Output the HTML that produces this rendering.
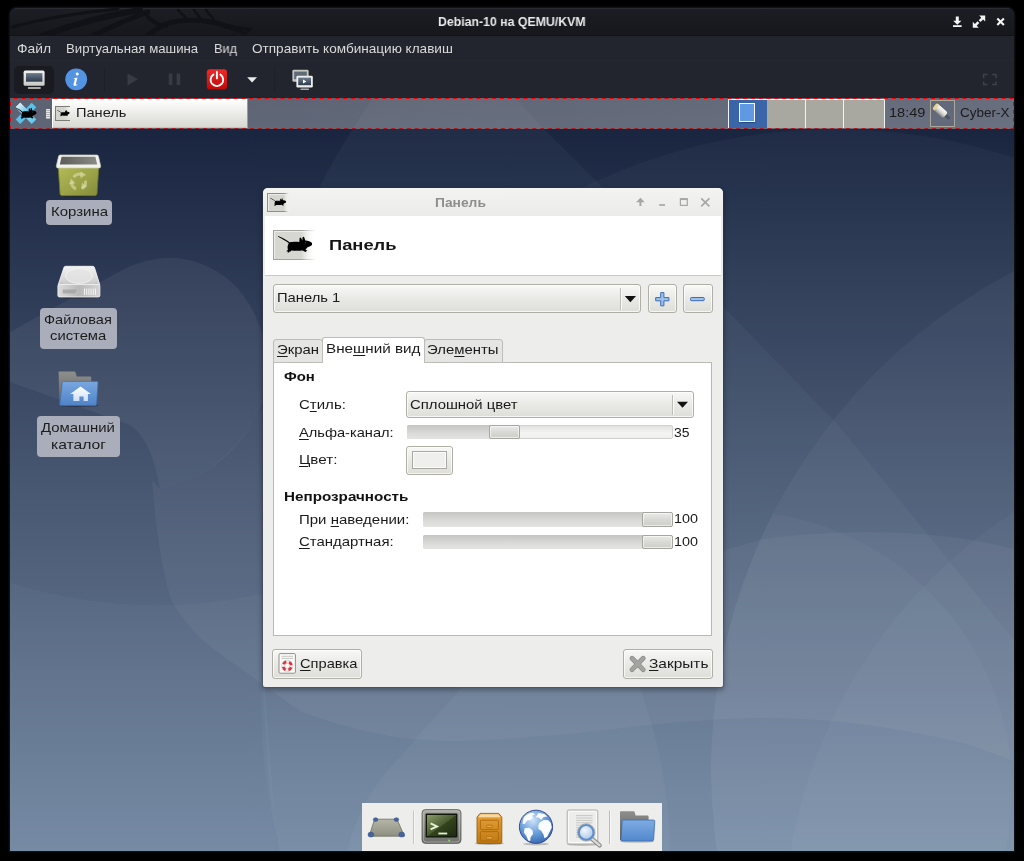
<!DOCTYPE html>
<html><head><meta charset="utf-8"><title>Debian-10 QEMU/KVM</title>
<style>
html,body{margin:0;padding:0;background:#000;}
body{width:1024px;height:861px;position:relative;overflow:hidden;font-family:"Liberation Sans",sans-serif;}
.a{position:absolute;}
.t{position:absolute;white-space:nowrap;line-height:1;transform-origin:0 0;will-change:transform;}
u{text-decoration:underline;text-decoration-thickness:1px;text-underline-offset:1.5px;}
.btn{position:absolute;box-sizing:border-box;border:1px solid #b0afa6;border-radius:3px;background:linear-gradient(#f8f8f7,#e9e9e6 50%,#deded9);box-shadow:inset 0 0 0 1px rgba(255,255,255,.7);}
.trough{position:absolute;box-sizing:border-box;border:1px solid #d0d0cc;border-radius:2px;background:linear-gradient(#e2e2e0,#f4f4f3 60%,#f0f0ee);}
.fill{position:absolute;box-sizing:border-box;border-radius:2px 0 0 2px;background:linear-gradient(#c5c5c3,#dcdcda 65%,#e3e3e1);}
.knob{position:absolute;box-sizing:border-box;border:1px solid #a6a5a0;border-radius:2px;background:linear-gradient(#e9e9e7,#d9d9d6 50%,#cdcdca);box-shadow:inset 0 0 0 1px rgba(255,255,255,.6);}
.lbl{position:absolute;background:#aaaeba;border-radius:4px;}
</style></head><body>
<div class="a" id="win" style="left:10px;top:8px;width:1004px;height:843px;border-radius:7px 7px 0 0;overflow:hidden;background:#23252e;box-shadow:0 0 2px 1px rgba(40,42,50,.55);">
<div class="a" style="left:0;top:0;width:1004px;height:28px;background:linear-gradient(#1c1e25,#191a1f 55%,#16171b);box-shadow:inset 0 1px 0 #2b2c33;"></div>
<svg class="a" style="left:0;top:0" width="340" height="28" viewBox="10 8 340 28">
<g fill="none" stroke="#111217" stroke-linecap="round">
<path d="M12 27 Q60 14 118 9" stroke-width="3"/>
<path d="M42 36 Q90 18 140 10" stroke-width="6"/>
<path d="M92 36 Q120 22 148 12" stroke-width="5"/>
<path d="M148 36 Q160 24 178 21 Q205 18 226 26 L242 31" stroke-width="5"/>
<path d="M146 14 Q152 24 166 26" stroke-width="4"/>
<path d="M186 18 L178 10 M200 18 L194 10 M214 20 L206 10" stroke-width="2.5"/>
<path d="M226 26 L250 29 L244 35" stroke-width="3"/>
</g>
</svg>

<div class="a" style="left:0;top:27px;width:1004px;height:1px;background:#121318;"></div>
<div class="a" style="left:0;top:52px;width:1004px;height:1px;background:#26282f;"></div>
<svg class="a" style="left:0;top:90px" width="1004" height="753" viewBox="10 98 1004 753">
<defs>
<linearGradient id="wg" x1="0" y1="98" x2="0" y2="851" gradientUnits="userSpaceOnUse">
<stop offset="0" stop-color="#162038"/><stop offset="0.045" stop-color="#1a2540"/><stop offset=".5" stop-color="#465570"/><stop offset="1" stop-color="#7487a2"/>
</linearGradient>
<clipPath id="c3clip"><circle cx="1273" cy="770" r="562"/></clipPath>
</defs>
<rect x="10" y="98" width="1004" height="753" fill="url(#wg)"/>
<g fill="#e8f3f4">
<circle cx="835" cy="703" r="574" fill-opacity="0.032"/>
<circle cx="1273" cy="770" r="562" fill-opacity="0.043"/>
<path d="M400 60 Q345 135 319 188 Q290 250 300 330 L290 600 L263 690 L268 770 L279 860 L1200 900 L1100 745 L1014 640 L838 425 L722 305 L603 188 L545 130 L480 60 Z" fill-opacity="0.037"/>
<path d="M10 332 L122 270 Q150 256 178 258 Q245 268 264 340 Q272 385 258 415 Q225 475 160 489 Q152 440 130 425 L10 382 Z" fill-opacity="0.06"/>
<path d="M152 480 Q158 560 172 602 Q190 632 216 651 L265 686 L300 711 Q380 742 457 741 Q540 738 614 729 Q690 719 760 718 Q800 718 844 722 Q910 730 967 744 L1014 761 L1014 549 Q970 538 926 534.6 Q885 531 844 532.6 Q800 534 763 539 L722 551 L700 560 L262 408 Q225 475 160 489 Z" fill-opacity="0.05"/>
<path d="M10 583 Q140 622 265 593 L265 690 L277 851 L10 851 Z" fill-opacity="0.03"/>
<path d="M345 862 Q356 800 402 755 Q430 722 457 693 L480 660 L630 660 L641 691 Q661 745 668 810 L671 862 Z" fill-opacity="0.04"/>
<circle cx="733" cy="790" r="279" fill-opacity="0.03" clip-path="url(#c3clip)"/>
<circle cx="1290" cy="937" r="507" fill-opacity="0.032"/>
</g>
</svg>

</div>
<div class="t" style="left:438.10px;top:15.07px;font-size:13.50px;font-weight:bold;color:#e9e9e9;transform:scaleX(0.9108);">Debian-10 на QEMU/KVM</div>
<div class="t" style="left:16.60px;top:41.83px;font-size:13.20px;color:#dadada;transform:scaleX(1.0477);">Файл</div>
<div class="t" style="left:66.10px;top:41.83px;font-size:13.20px;color:#dadada;transform:scaleX(0.9981);">Виртуальная машина</div>
<div class="t" style="left:213.60px;top:41.83px;font-size:13.20px;color:#dadada;transform:scaleX(0.9631);">Вид</div>
<div class="t" style="left:251.60px;top:41.83px;font-size:13.20px;color:#dadada;transform:scaleX(1.0291);">Отправить комбинацию клавиш</div>
<!-- titlebar buttons -->
<svg class="a" style="left:950px;top:12px" width="60" height="20" viewBox="950 12 60 20">
<g fill="#f4f4f4">
<path d="M955.8 16.5h3v4.2h2.6l-4.1 4.1-4.1-4.1h2.6z"/><rect x="953" y="25.2" width="8.6" height="1.8"/>
<path d="M979.2 15.6h6v6l-2.1-2.1-2.6 2.6-1.8-1.8 2.6-2.6z"/><path d="M978.8 27.8h-6v-6l2.1 2.1 2.6-2.6 1.8 1.8-2.6 2.6z"/>
</g>
<path d="M997.3 18.4l6.6 6.6M1003.9 18.4l-6.6 6.6" stroke="#f4f4f4" stroke-width="2.1" fill="none"/>
</svg>
<!-- toolbar: active monitor button -->
<div class="a" style="left:14px;top:66px;width:40px;height:28px;border-radius:5px;background:#1a1b21;"></div>
<svg class="a" style="left:20px;top:66px" width="300" height="28" viewBox="20 66 300 28">
<defs>
<linearGradient id="scr" x1="0" y1="0" x2="0" y2="1"><stop offset="0" stop-color="#6b7b8e"/><stop offset="1" stop-color="#2e3b4c"/></linearGradient>
<linearGradient id="pw" x1="0" y1="0" x2="0" y2="1"><stop offset="0" stop-color="#ef2929"/><stop offset="1" stop-color="#c20808"/></linearGradient>
<linearGradient id="bez" x1="0" y1="0" x2="0" y2="1"><stop offset="0" stop-color="#f2f2f0"/><stop offset="1" stop-color="#c9c9c5"/></linearGradient>
</defs>
<!-- monitor -->
<rect x="23.6" y="70.6" width="21" height="15.2" rx="1.6" fill="url(#bez)"/>
<rect x="26" y="73.1" width="16.4" height="8.6" fill="url(#scr)"/>
<rect x="27.8" y="87" width="13" height="2" rx=".8" fill="#a9a9a5"/>
<!-- info -->
<circle cx="76.2" cy="79.3" r="10.9" fill="#5294e2"/>
<path d="M77.3 72.6a1.5 1.5 0 1 1-.1 3 1.5 1.5 0 0 1 .1-3zM73.9 78.3l3.6-.9-1.7 6.6c-.2.8.3.9 1.4.2l.3.5c-1.6 1.5-4.5 1.9-3.9-.6l1.2-4.6c.1-.6-.3-.7-1-.6z" fill="#fff"/>
<!-- separator -->
<rect x="104" y="68" width="1" height="25" fill="#1e2027"/>
<!-- play / pause (disabled) -->
<path d="M127.5 73.2v12.2l10.4-6.1z" fill="#393b43"/>
<rect x="168.8" y="73.6" width="3.6" height="11.4" fill="#393b43"/><rect x="176.6" y="73.6" width="3.6" height="11.4" fill="#393b43"/>
<!-- power -->
<rect x="206.8" y="69.2" width="20.2" height="20.2" rx="3.2" fill="url(#pw)"/>
<path d="M213.4 74.6a6.3 6.3 0 1 0 7 0" stroke="#fff" stroke-width="1.9" fill="none" stroke-linecap="round"/>
<path d="M216.9 71.8v6.6" stroke="#fff" stroke-width="1.9" stroke-linecap="round"/>
<!-- dropdown arrow -->
<path d="M247.2 77.2h9.8l-4.9 5.4z" fill="#ececec"/>
<!-- separator -->
<rect x="274" y="68" width="1" height="25" fill="#1e2027"/>
<!-- screens -->
<rect x="292.4" y="69.8" width="16.2" height="12" rx="1.4" fill="#c4c4c0"/>
<rect x="294.2" y="71.6" width="12.6" height="7.6" fill="#5d6a78"/>
<rect x="296.4" y="75.8" width="16.4" height="11.8" rx="1.4" fill="#eeeeec"/>
<rect x="298.2" y="77.6" width="12.8" height="7.6" fill="url(#scr)"/>
<path d="M303 79.4v4l3.4-2z" fill="#fff"/>
<rect x="300.4" y="88.4" width="8.6" height="1.6" rx=".6" fill="#a9a9a5"/>
</svg>
<!-- fullscreen (disabled) -->
<svg class="a" style="left:980px;top:70px" width="20" height="18" viewBox="980 70 20 18">
<path d="M983.6 78.2v-3.6h3.8M992.2 74.6h3.8v3.6M996 81.4v3.2h-3.8M987.4 84.6h-3.8v-3.2" stroke="#404145" stroke-width="1.5" fill="none"/>
</svg>

<div class="a" style="left:0;top:0;width:1024px;height:861px;filter:blur(.35px);">
<!-- ===== xfce top panel ===== -->
<div class="a" style="left:10px;top:98px;width:1004px;height:31px;background:linear-gradient(90deg,rgba(230,230,228,.335),rgba(232,232,232,.39));"></div>
<svg class="a" style="left:10px;top:98px" width="1004" height="31" viewBox="10 98 1004 31">
<defs>
<linearGradient id="xa" x1="0" y1="0" x2="1" y2="1"><stop offset="0" stop-color="#ffffff"/><stop offset=".45" stop-color="#a8def2"/><stop offset="1" stop-color="#4fbfe8"/></linearGradient>
<symbol id="mouse" viewBox="0 0 34.3 17.7" preserveAspectRatio="none">
<path d="M0.1 0 C4 1.600 8.500 3.800 11.600 6.300 C14 5.400 18 5.600 21.300 6 L21.600 2.200 C21.800 1.300 22.600 1.200 23.100 2 L24.300 4.600 L24.600 1.300 C24.900 0.400 25.900 0.500 26.300 1.400 L27.300 4.600 C30 4.600 33 5.600 34.200 7.200 C34.600 8.200 33.800 9.400 32.600 10 L29.200 11.400 C28.600 12.400 28 13 27.400 13.400 L29.600 15 L27.800 15.100 L28.600 16.300 L26.400 15.600 L24.600 14.400 C21 15 16 15 13.400 14.600 L11.800 16.200 L11.400 15.200 L9.800 17.400 L9.900 15.400 L8.200 15.200 L10 13.800 C9.200 11.800 9.600 9 10.800 7.200 C8 5 4 2.600 0 0.700 Z" fill="#000"/>
<circle cx="27.700" cy="6.700" r=".55" fill="#6a6a6a"/>
</symbol>
</defs>
<!-- dashed border -->
<path d="M10 98.5H1014" stroke="#f40000" stroke-width="1" stroke-dasharray="3.92 3.92" stroke-dashoffset="-3.9"/>
<path d="M10 128.5H1014" stroke="#a81a1c" stroke-width="1" stroke-dasharray="3.92 3.92" stroke-dashoffset="-4.9"/>
<path d="M10.5 99V128" stroke="#f40000" stroke-width="1" stroke-dasharray="3.92 3.92" stroke-dashoffset="-3"/>
<path d="M1013.5 99V128" stroke="#f40000" stroke-width="1" stroke-dasharray="3.92 3.92" stroke-dashoffset="-3"/>
<!-- xfce logo -->
<g>
<path d="M15.7 107.2l4.6-4.5 16 16.8-4.6 4.6z" fill="url(#xa)"/>
<path d="M31.7 102.7l4.6 4.6-16 16.8-4.6-4.6z" fill="#58c3ea"/>
<path d="M15.7 107.2l4.6-4.5 7.4 7.6-4.6 4.6z" fill="url(#xa)"/>
<use href="#mouse" x="15.4" y="107.300" width="21.300" height="12.500"/>
</g>
<!-- handle -->
<g fill="#e6e6de"><rect x="46" y="109" width="4" height="1.3"/><rect x="46" y="111" width="4" height="1.3"/><rect x="46" y="113" width="4" height="1.3"/><rect x="46" y="115" width="4" height="1.3"/><rect x="46" y="117" width="4" height="1.6"/></g>
<g fill="#c4c4bc"><rect x="46" y="110.3" width="4" height=".7"/><rect x="46" y="112.3" width="4" height=".7"/><rect x="46" y="114.3" width="4" height=".7"/><rect x="46" y="116.3" width="4" height=".7"/></g>
</svg>
<!-- task button -->
<div class="a" style="left:52px;top:99px;width:196px;height:29px;box-sizing:border-box;background:linear-gradient(#ffffff,#f4f4f2 30%,#e6e6e2 65%,#d9d9d3);border-left:1px solid #fff;border-right:1px solid #9c9c92;border-bottom:1px solid #c4c4bc;"></div>
<div class="a" style="left:55px;top:106px;width:15px;height:15px;box-sizing:border-box;border:1px solid #7c7c76;border-right:none;background:linear-gradient(90deg,#d3d4ce 55%,rgba(235,235,232,0));"></div>
<svg class="a" style="left:57.2px;top:110.2px" width="12.8" height="6.8" viewBox="0 0 34.3 17.7" preserveAspectRatio="none"><use href="#mouse" width="34.3" height="17.7"/></svg>
<div class="t" style="left:76.10px;top:106.26px;font-size:13.40px;color:#1c1c1c;transform:scaleX(1.0909);">Панель</div>

<!-- pager -->
<div class="a" style="left:728px;top:99px;width:157px;height:29px;background:#f2f2ee;"></div>
<div class="a" style="left:729px;top:100px;width:37.6px;height:27.5px;background:#3a66a9;"></div>
<div class="a" style="left:738.6px;top:103.2px;width:16.6px;height:18.6px;box-sizing:border-box;border:1.2px solid #f4f6fa;background:#6198e2;box-shadow:0 .5px 1px rgba(20,40,80,.5);"></div>
<div class="a" style="left:767.4px;top:100px;width:37.4px;height:27.5px;background:#a9a8a0;"></div>
<div class="a" style="left:805.6px;top:100px;width:37.4px;height:27.5px;background:#a9a8a0;"></div>
<div class="a" style="left:843.8px;top:100px;width:40.2px;height:27.5px;background:#a9a8a0;"></div>
<div class="t" style="left:888.60px;top:106.36px;font-size:13.40px;color:#1c1c1c;transform:scaleX(1.0885);">18:49</div>

<!-- notifier button -->
<div class="a" style="left:930px;top:100px;width:25.4px;height:27.4px;box-sizing:border-box;border:1px solid #a9a69a;background:rgba(90,98,118,.35);"></div>
<svg class="a" style="left:932px;top:102px" width="22" height="24" viewBox="932 102 22 24">
<defs><linearGradient id="plug" x1="0" y1="0" x2="0" y2="1"><stop offset="0" stop-color="#ffffff"/><stop offset=".55" stop-color="#d8d8d6"/><stop offset="1" stop-color="#8e8e8a"/></linearGradient></defs>
<g transform="rotate(41 940.5 111)">
<rect x="946" y="109.600" width="6.600" height="2.800" rx="1.200" fill="#4e5158"/>
<rect x="932.600" y="107.300" width="14.600" height="7.400" rx="2.200" fill="url(#plug)"/>
<rect x="932.600" y="107.300" width="3.200" height="7.400" rx="1.600" fill="#ecd28a" fill-opacity=".9"/>
</g>
</svg>
<div class="t" style="left:959.60px;top:106.36px;font-size:13.40px;color:#1c1c1c;transform:scaleX(1.0052);">Cyber-X</div>


<!-- ===== desktop icons ===== -->
<svg class="a" style="left:50px;top:150px" width="60" height="260" viewBox="50 150 60 260">
<defs>
<linearGradient id="tb" x1="0" y1="0" x2="1" y2="1"><stop offset="0" stop-color="#b4bb57"/><stop offset="1" stop-color="#858c3a"/></linearGradient>
<linearGradient id="ti" x1="0" y1="0" x2="1" y2="0"><stop offset="0" stop-color="#5c5d59"/><stop offset="1" stop-color="#8a8b87"/></linearGradient>
<linearGradient id="dt" x1="0" y1="0" x2="0" y2="1"><stop offset="0" stop-color="#f4f4f4"/><stop offset="1" stop-color="#c9c9c9"/></linearGradient>
<linearGradient id="df" x1="0" y1="0" x2="1" y2="0"><stop offset="0" stop-color="#dcdcdc"/><stop offset=".5" stop-color="#b8b8b8"/><stop offset="1" stop-color="#d4d4d4"/></linearGradient>
<linearGradient id="fb" x1="0" y1="0" x2="0" y2="1"><stop offset="0" stop-color="#8e8e8c"/><stop offset="1" stop-color="#60605e"/></linearGradient>
<linearGradient id="ff" x1="0" y1="0" x2="0" y2="1"><stop offset="0" stop-color="#79a7df"/><stop offset="1" stop-color="#4f84c9"/></linearGradient>
<linearGradient id="hs" x1="0" y1="0" x2="0" y2="1"><stop offset="0" stop-color="#ffffff"/><stop offset="1" stop-color="#cfe0f5"/></linearGradient>
</defs>
<!-- trash -->
<ellipse cx="78.5" cy="195.6" rx="19" ry="1.6" fill="#000" fill-opacity=".35"/>
<path d="M58.2 166.5h40.6l-1.8 27.2c-.1 1.2-.9 2-2.1 2h-32.8c-1.2 0-2-.8-2.1-2z" fill="url(#tb)" stroke="#6f7628" stroke-width=".8"/>
<path d="M60.2 155h36.6c.8 0 1.4.4 1.6 1.1l2.2 9.6c.3 1.400-.4 2.3-1.800 2.300h-40.600c-1.400 0-2.100-.9-1.800-2.300l2.200-9.600c.2-.7.800-1.100 1.600-1.100z" fill="#f2f3ee" stroke="#c9ccb6" stroke-width=".7"/>
<path d="M61.6 156.8h33.800l1.800 7.800h-37.400z" fill="url(#ti)"/>
<g fill="none" stroke="#d9dea6" stroke-width="3" stroke-opacity=".62"><path d="M73.600 177.200a7 7 0 0 1 8.400-2.600"/><path d="M85.300 180.600a7 7 0 0 1-3.300 8"/><path d="M76 189a7 7 0 0 1-4.200-7"/></g>
<g fill="#d9dea6" fill-opacity=".66"><path d="M80.600 171.400l5.600 3.400-5.800 3.400z"/><path d="M87 186.400l-6 2.600 1-6.400z"/><path d="M69 184.600l2-6 4.400 4.600z"/></g>
<!-- drive -->
<ellipse cx="79" cy="297.200" rx="21" ry="1.500" fill="#000" fill-opacity=".3"/>
<path d="M65.600 266.300h27.200c.7 0 1.300.4 1.600 1l5.400 17.500h-41.600l5.800-17.500c.3-.6.900-1 1.600-1z" fill="url(#dt)" stroke="#fafafa" stroke-width=".8"/>
<ellipse cx="79" cy="276" rx="13.600" ry="7.400" fill="#e4e4e4" stroke="#f6f6f6" stroke-width=".7" fill-opacity=".8"/>
<rect x="57.900" y="284.600" width="42" height="12.400" rx="1.400" fill="url(#df)" stroke="#f4f4f4" stroke-width=".8"/>
<path d="M62.600 289.400h14.400l-2 4.200h-12.400z" fill="#9c9c9c" fill-opacity=".7"/>
<g stroke="#f4f4f4" stroke-width="1"><path d="M84.500 288.500v6.400M86.700 288.500v6.400M88.900 288.500v6.400M91.100 288.500v6.400M93.300 288.500v6.400M95.500 288.500v6.400"/></g>
<circle cx="62" cy="283" r=".7" fill="#bbb"/><circle cx="96" cy="283" r=".7" fill="#bbb"/>
<!-- home folder -->
<ellipse cx="79" cy="405.400" rx="19.500" ry="1.600" fill="#000" fill-opacity=".3"/>
<path d="M58.600 372.600c0-.6.400-1 1-1h14.800c.5 0 .9.300 1.100.8l1.300 4.200h13.400c.6 0 1 .4 1 1v27.600h-30.800c-.6 0-1-.4-1-1z" fill="url(#fb)"/>
<path d="M63.400 381.400h33.600c.7 0 1.100.5 1 1.200l-1.500 21.800c0 .6-.5 1-1.100 1h-34.600c-.6 0-1-.5-.9-1.100l2.400-21.900c.1-.6.500-1 1.100-1z" fill="url(#ff)" stroke="#3e70b4" stroke-width=".7"/>
<path d="M80.600 386.400l10.400 7.600h-3.100v7h-4.300v-4.400h-4.200v4.400h-6v-7h-3.200z" fill="url(#hs)"/>
</svg>
<div class="lbl" style="left:46px;top:200px;width:66px;height:24.800px;"></div>
<div class="t" style="left:50.60px;top:205.36px;font-size:13.40px;color:#1c1c1c;transform:scaleX(1.1167);">Корзина</div>

<div class="lbl" style="left:40.200px;top:308px;width:76.800px;height:40.800px;"></div>
<div class="t" style="left:44.00px;top:312.96px;font-size:13.40px;color:#1c1c1c;transform:scaleX(1.0912);">Файловая</div>

<div class="t" style="left:49.80px;top:329.06px;font-size:13.40px;color:#1c1c1c;transform:scaleX(1.1041);">система</div>

<div class="lbl" style="left:37px;top:416px;width:83px;height:41px;"></div>
<div class="t" style="left:40.50px;top:420.66px;font-size:13.40px;color:#1c1c1c;transform:scaleX(1.1134);">Домашний</div>

<div class="t" style="left:50.90px;top:437.56px;font-size:13.40px;color:#1c1c1c;transform:scaleX(1.1686);">каталог</div>

<!-- ===== Panel preferences dialog ===== -->
<div class="a" style="left:263px;top:188px;width:459.5px;height:499px;border-radius:5px 5px 2px 2px;background:#ededeb;box-shadow:0 0 0 .6px rgba(60,62,70,.55),0 2px 5px 1px rgba(10,15,30,.38);"></div>
<div class="a" style="left:263px;top:188px;width:459.5px;height:28px;border-radius:5px 5px 0 0;background:linear-gradient(#f3f3f2,#ebebe9);"></div>
<!-- title icon -->
<div class="a" style="left:267px;top:192.500px;width:21px;height:19.500px;box-sizing:border-box;border:1px solid #8e8e88;border-right:none;background:linear-gradient(90deg,#d5d6d0 80%,rgba(238,238,236,0) 100%);box-shadow:inset 1px 1px 0 #ebebe7;"></div>
<div class="a" style="left:283.500px;top:192px;width:5.500px;height:21px;background:linear-gradient(90deg,rgba(239,239,237,0),#efefed 90%);"></div>
<svg class="a" style="left:269.8px;top:198.2px" width="16.3" height="8.4" viewBox="0 0 34.3 17.7" preserveAspectRatio="none"><use href="#mouse" width="34.3" height="17.7"/></svg>
<div class="t" style="left:434.70px;top:197.00px;font-size:12.40px;font-weight:bold;color:#8f8f8d;transform:scaleX(1.1139);">Панель</div>

<svg class="a" style="left:630px;top:194px" width="86" height="16" viewBox="630 194 86 16">
<path d="M640.400 197.800l4.300 4.400h-3.300v3.800h-2v-3.800h-3.300z" fill="#a6a6a4"/>
<g stroke="#a6a6a4" fill="none" stroke-width="1.700">
<path d="M659.200 205h5.800"/>
<path d="M680 199.200h7.600"/>
<rect x="680.400" y="198.800" width="6.900" height="6.600" stroke-width="1.200"/>
<path d="M701.200 198.400l8.200 8M709.400 198.400l-8.200 8" stroke-width="1.600"/>
</g></svg>
<!-- white header -->
<div class="a" style="left:265px;top:216px;width:455.500px;height:58.500px;background:#fff;"></div>
<div class="a" style="left:265px;top:274.500px;width:455.500px;height:1.200px;background:#c8c8c4;"></div>
<div class="a" style="left:273px;top:230px;width:43px;height:30px;box-sizing:border-box;border:1px solid #a4a49e;border-right:none;background:linear-gradient(90deg,#d6d7d1 66%,rgba(255,255,255,0) 100%);box-shadow:inset 1px 1px 0 #ecece8;"></div>
<div class="a" style="left:301px;top:229px;width:16px;height:32px;background:linear-gradient(90deg,rgba(255,255,255,0),#fff 92%);"></div>
<svg class="a" style="left:277.7px;top:236.3px" width="34.3" height="17.7" viewBox="0 0 34.3 17.7"><use href="#mouse" width="34.3" height="17.7"/></svg>
<div class="t" style="left:329.10px;top:236.56px;font-size:15.40px;font-weight:bold;color:#151515;transform:scaleX(1.1894);">Панель</div>

<!-- panel chooser -->
<div class="btn" style="left:273px;top:284.200px;width:368px;height:29.300px;"></div>
<div class="a" style="left:620px;top:288px;width:1px;height:22px;background:#bdbdb6;"></div><div class="a" style="left:621px;top:288px;width:1px;height:22px;background:#fbfbfa;"></div>
<svg class="a" style="left:623px;top:294px" width="15" height="10" viewBox="623 294 15 10"><path d="M624.800 296h11.200l-5.600 6.200z" fill="#111"/></svg>
<div class="t" style="left:277.10px;top:291.46px;font-size:13.40px;color:#1a1a1a;transform:scaleX(1.1015);">Панель 1</div>

<div class="btn" style="left:647.500px;top:284.200px;width:29.500px;height:29.300px;"></div>
<div class="btn" style="left:683px;top:284.200px;width:29.500px;height:29.300px;"></div>
<svg class="a" style="left:652px;top:290px" width="56" height="18" viewBox="652 290 56 18">
<path d="M660.700 292.600h3.200v5h5v3.200h-5v5h-3.200v-5h-5v-3.200h5z" fill="#9fc0e8" stroke="#3b6db5" stroke-width="1" stroke-linejoin="round"/>
<rect x="690.600" y="297.500" width="13.600" height="3.200" rx=".8" fill="#9fc0e8" stroke="#3b6db5" stroke-width="1"/>
</svg>
<!-- notebook -->
<div class="a" style="left:273px;top:361.500px;width:439px;height:274.500px;box-sizing:border-box;background:#fff;border:1px solid #b9b9b3;"></div>
<div class="a" style="left:273px;top:338.500px;width:49.500px;height:24px;box-sizing:border-box;background:#e5e5e3;border:1px solid #bdbdb7;border-radius:3px 3px 0 0;"></div>
<div class="a" style="left:424px;top:338.500px;width:79px;height:24px;box-sizing:border-box;background:#e5e5e3;border:1px solid #bdbdb7;border-radius:3px 3px 0 0;"></div>
<div class="a" style="left:322px;top:337px;width:102.500px;height:26px;box-sizing:border-box;background:#fff;border:1px solid #bdbdb7;border-bottom:none;border-radius:3px 3px 0 0;"></div>
<div class="t" style="left:276.80px;top:343.46px;font-size:13.40px;color:#1a1a1a;transform:scaleX(1.1111);"><u>Э</u>кран</div>

<div class="t" style="left:326.10px;top:342.46px;font-size:13.40px;color:#1a1a1a;transform:scaleX(1.1378);">Вне<u>ш</u>ний вид</div>

<div class="t" style="left:426.70px;top:343.46px;font-size:13.40px;color:#1a1a1a;transform:scaleX(1.1121);">Эле<u>м</u>енты</div>

<div class="t" style="left:284.10px;top:369.96px;font-size:13.40px;font-weight:bold;color:#111;transform:scaleX(1.1149);">Фон</div>

<div class="t" style="left:298.70px;top:397.96px;font-size:13.40px;color:#1a1a1a;transform:scaleX(1.1214);">С<u>т</u>иль:</div>

<div class="btn" style="left:406px;top:391px;width:287.500px;height:27px;"></div>
<div class="a" style="left:672px;top:394.500px;width:1px;height:20px;background:#bdbdb6;"></div><div class="a" style="left:673px;top:394.500px;width:1px;height:20px;background:#fbfbfa;"></div>
<svg class="a" style="left:675px;top:400px" width="15" height="10" viewBox="675 400 15 10"><path d="M677 401.800h11l-5.500 6z" fill="#111"/></svg>
<div class="t" style="left:410.10px;top:397.96px;font-size:13.40px;color:#1a1a1a;transform:scaleX(1.1108);">Сплошной цвет</div>

<div class="t" style="left:298.70px;top:425.66px;font-size:13.40px;color:#1a1a1a;transform:scaleX(1.0925);"><u>А</u>льфа-канал:</div>

<div class="trough" style="left:407px;top:425px;width:265.500px;height:14.400px;"></div>
<div class="fill" style="left:407px;top:425px;width:90px;height:14.400px;"></div>
<div class="knob" style="left:489.300px;top:425px;width:31px;height:14.400px;"></div>
<div class="t" style="left:674.30px;top:425.66px;font-size:13.40px;color:#1a1a1a;transform:scaleX(1.0399);">35</div>

<div class="t" style="left:298.70px;top:453.26px;font-size:13.40px;color:#1a1a1a;transform:scaleX(1.1378);"><u>Ц</u>вет:</div>

<div class="btn" style="left:406px;top:446px;width:46.800px;height:28.500px;"></div>
<div class="a" style="left:411.800px;top:451.400px;width:35.600px;height:17.400px;box-sizing:border-box;background:#efefed;border:1px solid #a9a9a2;box-shadow:inset 0 0 0 1px #fbfbfa;"></div>
<div class="t" style="left:284.10px;top:489.66px;font-size:13.40px;font-weight:bold;color:#111;transform:scaleX(1.1368);">Непрозрачность</div>

<div class="t" style="left:298.70px;top:512.66px;font-size:13.40px;color:#1a1a1a;transform:scaleX(1.1193);">При <u>н</u>аведении:</div>

<div class="trough" style="left:423px;top:512.400px;width:250px;height:14.400px;"></div>
<div class="fill" style="left:423px;top:512.400px;width:225px;height:14.400px;"></div>
<div class="knob" style="left:642px;top:512.400px;width:31px;height:14.400px;"></div>
<div class="t" style="left:674.00px;top:512.46px;font-size:13.40px;color:#1a1a1a;transform:scaleX(1.0734);">100</div>

<div class="t" style="left:298.70px;top:534.66px;font-size:13.40px;color:#1a1a1a;transform:scaleX(1.1152);"><u>С</u>тандартная:</div>

<div class="trough" style="left:423px;top:534.600px;width:250px;height:14.400px;"></div>
<div class="fill" style="left:423px;top:534.600px;width:225px;height:14.400px;"></div>
<div class="knob" style="left:642px;top:534.600px;width:31px;height:14.400px;"></div>
<div class="t" style="left:674.00px;top:534.66px;font-size:13.40px;color:#1a1a1a;transform:scaleX(1.0734);">100</div>

<!-- bottom buttons -->
<div class="btn" style="left:272.300px;top:649px;width:89.700px;height:29.600px;"></div>
<svg class="a" style="left:277px;top:652px" width="21" height="23" viewBox="277 652 21 23">
<rect x="279" y="653.600" width="16.400" height="19.600" rx="1" fill="#fbfbfa" stroke="#8e8e8a" stroke-width="1"/>
<path d="M281.400 656.300h11.600M281.400 658.400h11.600" stroke="#c0c0ba" stroke-width=".9"/>
<circle cx="287.200" cy="665.900" r="5.600" fill="none" stroke="#b4b4b0" stroke-width=".6"/>
<circle cx="287.200" cy="665.900" r="4.100" fill="none" stroke="#efefed" stroke-width="2.800"/>
<circle cx="287.200" cy="665.900" r="4.100" fill="none" stroke="#e5303c" stroke-width="2.800" stroke-dasharray="3.600 2.840" stroke-dashoffset="-1.420"/>
<circle cx="287.200" cy="665.900" r="2.500" fill="none" stroke="#c4c4c0" stroke-width=".5"/>
</svg>
<div class="t" style="left:299.60px;top:656.66px;font-size:13.40px;color:#1a1a1a;transform:scaleX(1.0938);"><u>С</u>правка</div>

<div class="btn" style="left:623px;top:649px;width:89.700px;height:29.600px;"></div>
<svg class="a" style="left:627px;top:653px" width="21" height="21" viewBox="627 653 21 21">
<path d="M632 658.200l11.200 11.400M643.200 658.200l-11.200 11.400" stroke="#858582" stroke-width="4.800" stroke-linecap="round"/>
<path d="M632 658.200l11.200 11.400M643.200 658.200l-11.200 11.400" stroke="#a3a39f" stroke-width="3.600" stroke-linecap="round"/>
</svg>
<div class="t" style="left:649.40px;top:656.66px;font-size:13.40px;color:#1a1a1a;transform:scaleX(1.1528);"><u>З</u>акрыть</div>


<!-- ===== bottom dock ===== -->
<div class="a" style="left:362px;top:803px;width:300px;height:48px;background:#ededeb;"></div>
<svg class="a" style="left:362px;top:803px" width="300" height="48" viewBox="362 803 300 48">
<defs>
<linearGradient id="sd" x1="0" y1="0" x2="0" y2="1"><stop offset="0" stop-color="#b5b6a6"/><stop offset="1" stop-color="#8e8f80"/></linearGradient>
<linearGradient id="tbz" x1="0" y1="0" x2="0" y2="1"><stop offset="0" stop-color="#a8a8a4"/><stop offset="1" stop-color="#6e6e6a"/></linearGradient>
<linearGradient id="tsc" x1="0" y1="0" x2="1" y2="1"><stop offset="0" stop-color="#8a9c6a"/><stop offset=".5" stop-color="#4a5c30"/><stop offset=".51" stop-color="#34441e"/><stop offset="1" stop-color="#1c2a10"/></linearGradient>
<linearGradient id="cab" x1="0" y1="0" x2="0" y2="1"><stop offset="0" stop-color="#e9a03a"/><stop offset="1" stop-color="#c17a12"/></linearGradient>
<radialGradient id="glb" cx=".4" cy=".3" r=".8"><stop offset="0" stop-color="#cfe3f8"/><stop offset=".5" stop-color="#6a9fdc"/><stop offset="1" stop-color="#2c5ea6"/></radialGradient>
<radialGradient id="lens" cx=".4" cy=".35" r=".7"><stop offset="0" stop-color="#f2f7fc"/><stop offset="1" stop-color="#a9c6e6"/></radialGradient>
<linearGradient id="dfb" x1="0" y1="0" x2="0" y2="1"><stop offset="0" stop-color="#8e8e8c"/><stop offset="1" stop-color="#5c5c5a"/></linearGradient>
<linearGradient id="dff" x1="0" y1="0" x2="0" y2="1"><stop offset="0" stop-color="#7fabe2"/><stop offset="1" stop-color="#5288cc"/></linearGradient>
</defs>
<!-- show desktop -->
<path d="M374.600 819.200h22.400l7.400 17h-35.200z" fill="url(#sd)" stroke="#6c6d60" stroke-width=".8" stroke-linejoin="round"/>
<g fill="#46639d" stroke="#34508a" stroke-width=".5"><ellipse cx="375.600" cy="819.600" rx="2.300" ry="1.900"/><ellipse cx="396.400" cy="819.600" rx="2.300" ry="1.900"/><ellipse cx="370.900" cy="834.600" rx="2.900" ry="2.500"/><ellipse cx="401.700" cy="834.600" rx="2.900" ry="2.500"/></g>
<!-- separators -->
<rect x="413.200" y="810.600" width="1" height="33.400" fill="#bcbcb6"/><rect x="414.200" y="810.600" width=".8" height="33.400" fill="#fafaf9"/>
<rect x="609" y="810.600" width="1" height="33.400" fill="#bcbcb6"/><rect x="610" y="810.600" width=".8" height="33.400" fill="#fafaf9"/>
<!-- terminal -->
<rect x="422" y="809.600" width="39" height="33.800" rx="3.400" fill="url(#tbz)" stroke="#5a5a56" stroke-width=".8"/>
<rect x="423.400" y="811" width="36.200" height="31" rx="2.600" fill="none" stroke="#c8c8c4" stroke-width=".8" stroke-opacity=".7"/>
<rect x="425.600" y="813.600" width="31.800" height="24" rx="1" fill="#10170a"/>
<rect x="427" y="815" width="29" height="21.200" fill="url(#tsc)"/>
<path d="M430.600 823.400l6.400 3-6.400 3" stroke="#e4f0d4" stroke-width="1.900" fill="none"/>
<rect x="438.400" y="832.600" width="8.800" height="1.800" fill="#e4f0d4"/>
<circle cx="449.200" cy="840.600" r="1" fill="#86e060"/>
<!-- file cabinet -->
<ellipse cx="489.400" cy="843.600" rx="14.500" ry="1.400" fill="#000" fill-opacity=".25"/>
<path d="M477 817.200l3-3.800h18.800l3 3.800v25c0 .7-.5 1.200-1.200 1.200h-22.400c-.7 0-1.200-.5-1.200-1.200z" fill="url(#cab)" stroke="#8f5902" stroke-width=".8"/>
<path d="M478 817.200l2.600-3h17.600l2.600 3z" fill="#f6d9a4"/>
<rect x="480.400" y="820.200" width="18" height="9.400" rx=".8" fill="none" stroke="#a86a0a" stroke-width=".9"/>
<rect x="480.400" y="831.600" width="18" height="9.400" rx=".8" fill="none" stroke="#a86a0a" stroke-width=".9"/>
<rect x="486.600" y="825.200" width="5.600" height="2.400" rx=".6" fill="#e9a844" stroke="#9a5f06" stroke-width=".6"/>
<rect x="486.600" y="836.600" width="5.600" height="2.400" rx=".6" fill="#e9a844" stroke="#9a5f06" stroke-width=".6"/>
<!-- globe -->
<ellipse cx="536" cy="844" rx="13" ry="1.500" fill="#000" fill-opacity=".2"/>
<circle cx="536" cy="826.800" r="16.600" fill="url(#glb)" stroke="#3a4c92" stroke-width="1"/>
<path d="M524.400 816.600c2.600-2.400 5.800-3.600 8.400-3.800l2.200 1.800-3.200 1.200 1.600 1.800-2.800 2.400-3.400.4-2.200 3.400-2.400.2c.2-2.600.8-5.200 1.800-7.400z" fill="#fafcff"/>
<path d="M538.400 813l5.800 1 3.200 2.400-3.800.6-2.400 2.800-2.800-2.200-2.600-.4z" fill="#fafcff"/>
<path d="M524.600 828.200l4.800-.4 3.200 2.600.4 3.600-2.400 3.200-.4 3.800-2-.6-2-4.600-2.200-3.200z" fill="#fafcff"/>
<path d="M539.800 822.400l4-2.400 4.600.2 2.400 2.800 1 4.400-2 4.200-2.600 5.200-2.800 1.400-1-4-2.400-3.600-2.400-1.400-.4-3.800z" fill="#fafcff"/>
<!-- document search -->
<ellipse cx="583" cy="844.400" rx="16" ry="1.500" fill="#000" fill-opacity=".2"/>
<rect x="567.200" y="810" width="30.600" height="34" rx="1.600" fill="#ededeb" stroke="#a6a6a2" stroke-width=".9"/>
<rect x="568.600" y="811.400" width="27.800" height="31.200" rx="1" fill="none" stroke="#fdfdfd" stroke-width=".9"/>
<g stroke="#c2c2be" stroke-width=".9"><path d="M576 815.600h16.600M576 818h16.600M576 820.400h16.600M576 822.800h16.600M576 825.200h8M576 827.600h5M576 830h4M576 832.400h4M576 834.800h5M576 837.200h7"/></g>
<path d="M591.400 838.400l8.200 7" stroke="#8a8a88" stroke-width="4.400" stroke-linecap="round"/>
<path d="M591.400 838.400l8.200 7" stroke="#dcdcda" stroke-width="2.200" stroke-linecap="round"/>
<circle cx="586.200" cy="832.400" r="7.400" fill="url(#lens)" stroke="#5b8fd4" stroke-width="2.200"/>
<circle cx="586.200" cy="832.400" r="8.700" fill="none" stroke="#9a9a98" stroke-width=".7"/>
<!-- folder -->
<ellipse cx="637" cy="841.400" rx="17" ry="1.400" fill="#000" fill-opacity=".2"/>
<path d="M620 812.400c0-.7.500-1.200 1.200-1.200h12.200c.6 0 1 .3 1.200.9l1 3.500h11.800c.7 0 1.200.5 1.200 1.200v23.600h-27.400c-.7 0-1.200-.5-1.200-1.200z" fill="url(#dfb)"/>
<path d="M623.400 820h30.200c.8 0 1.300.6 1.200 1.400l-1.200 18.400c0 .7-.6 1.200-1.300 1.200h-30.200c-.7 0-1.200-.6-1.100-1.300l1.200-18.500c.1-.7.500-1.200 1.200-1.200z" fill="url(#dff)" stroke="#3c6eb4" stroke-width=".8"/>
</svg>


</div>
</body></html>
